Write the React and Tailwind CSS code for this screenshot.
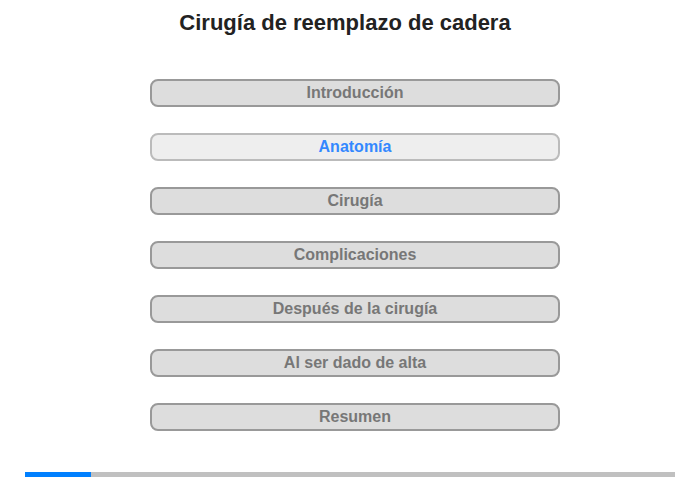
const sections = [
  { label: 'Introducción' },
  { label: 'Anatomía', active: true },
  { label: 'Cirugía' },
  { label: 'Complicaciones' },
  { label: 'Después de la cirugía' },
  { label: 'Al ser dado de alta' },
  { label: 'Resumen' },
];

export default function App() {
  return (
    <div className="w-[700px] h-[480px] bg-white font-['Liberation_Sans',Arial,sans-serif] flex flex-col items-center">
      <h1 className="mt-[9px] pr-[10px] text-[22px] leading-[28px] font-bold text-[#222]">
        Cirugía de reemplazo de cadera
      </h1>

      {/* Menu */}
      <div className="mt-[42px] pl-[10px] flex flex-col gap-[26px]">
        {sections.map((s) => (
          <button
            key={s.label}
            className={
              s.active
                ? 'w-[410px] h-[28px] rounded-[8px] border-2 border-[#bbbbbb] bg-[#eeeeee] text-[16px] font-bold text-[#3388ff] flex items-center justify-center'
                : 'w-[410px] h-[28px] rounded-[8px] border-2 border-[#999999] bg-[#dddddd] text-[16px] font-bold text-[#777777] flex items-center justify-center'
            }
          >
            {s.label}
          </button>
        ))}
      </div>

      {/* Progress */}
      <div className="mt-[41px] w-[650px] h-[5px] bg-[#c0c0c0] flex">
        <div className="w-[66px] h-full bg-[#0080ff]" />
      </div>
    </div>
  );
}
